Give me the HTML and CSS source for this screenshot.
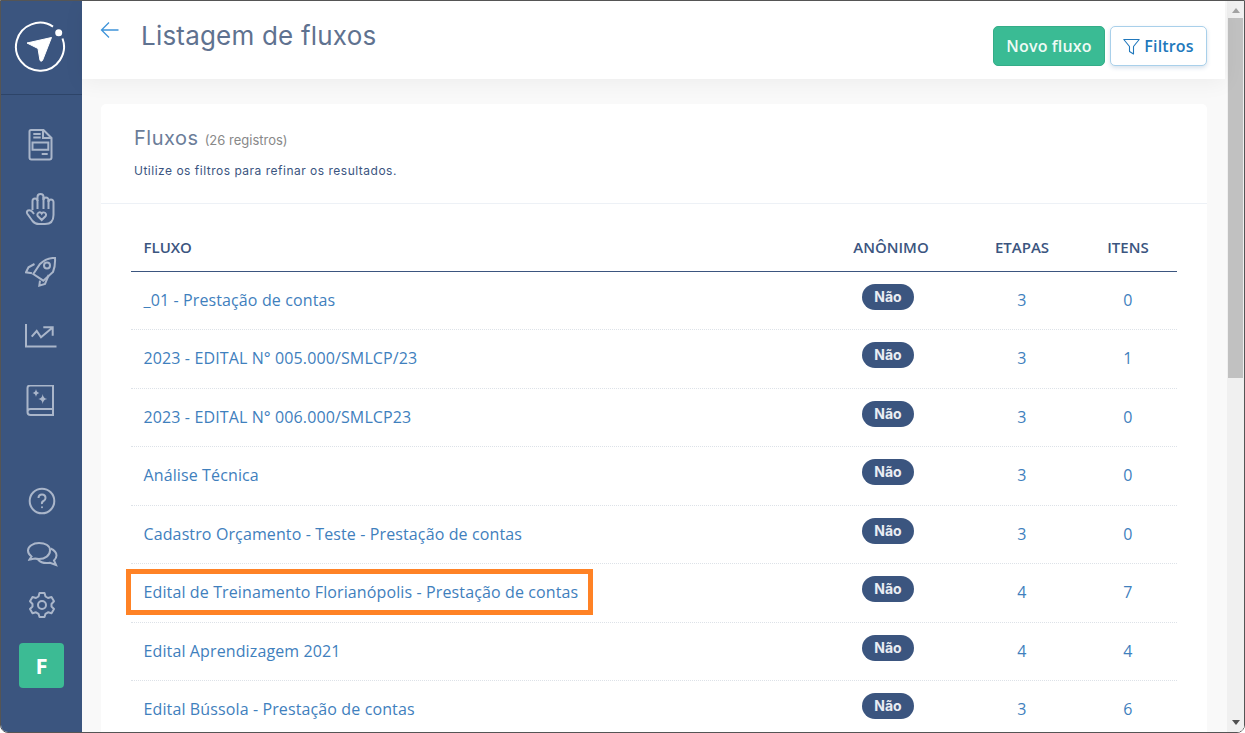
FILE: index.html
```html
<!DOCTYPE html>
<html lang="pt">
<head>
<meta charset="utf-8">
<title>Listagem de fluxos</title>
<link rel="stylesheet" href="styles.css">
</head>
<body>
<div class="window">
  <aside class="sidebar">
    <div class="logo">
      <svg width="52" height="52" viewBox="0 0 52 52" fill="none">
        <path d="M39 5.600A24 24 0 1 0 48.500 17.500" stroke="#fff" stroke-width="2"/>
        <circle cx="44.700" cy="11.700" r="3.500" fill="#fff"/>
        <path d="M13 22 37.500 16.500 28.500 39.500Q27 41 26 39.500L24 27.500Z" fill="#fff" stroke="#fff" stroke-linejoin="round"/>
      </svg>
    </div>
    <nav class="nav-top">
      <svg class="ico" width="32" height="32" viewBox="0 0 32 32"><path d="M6 1H18.500L26.500 9V28.500A2 2 0 0 1 24.500 30.500H6.500A2 2 0 0 1 4.500 28.500V2.500A1.500 1.500 0 0 1 6 1Z"/><path d="M18 1.500V9H26.500M8.300 5H15.700M8.300 8.500H15.700M7.500 13.500H23.300V20.700H7.500ZM16.700 25H22.700"/></svg>
      <svg class="ico" width="32" height="32" viewBox="0 0 32 32"><path d="M7.500 17V8A2.500 2.500 0 0 1 12.500 8V4A3 3 0 0 1 18.500 4V7A2.500 2.500 0 0 1 23.500 7V9A2.500 2.500 0 0 1 28.500 9V22Q28.500 31 20 31H14Q10 31 7.500 28L2.500 21Q1 18.500 3 17.500T7 18.500L9 21"/><path d="M12.500 7V16M18.500 4V16M23.500 7V16"/><path d="M16.700 27 12.700 23A2.300 2.300 0 0 1 16.700 20.500 2.300 2.300 0 0 1 20.700 23Z"/></svg>
      <svg class="ico" width="32" height="32" viewBox="0 0 32 32"><path d="M30 .8Q21 1 15 7L8.300 17 18.300 23.700 28 15Q30.500 9 30 .8Z"/><circle cx="22" cy="8.500" r="3"/><path d="M9.500 7 3.500 10.300 1 15.300 7 16.300M23.700 18 20 27 14.300 28.700 15 23.700"/></svg>
      <svg class="ico" width="32" height="32" viewBox="0 0 32 32"><path d="M1 3V25.500H31.500"/><path d="M6.700 15.700 11.700 10 16 16.300 26.700 7.300M18.300 6.300H27.700V14.700"/></svg>
      <svg class="ico" width="32" height="32" viewBox="0 0 32 32"><path d="M28 .5H5Q2.500 .5 2.500 3V27Q2.500 30 5.500 30H28V.5ZM2.500 27Q2.500 24 5.500 24H28"/><path d="M11 4Q11.500 7.500 14.500 8 11.500 8.500 11 12 10.500 8.500 7.500 8 10.500 7.500 11 4ZM17.700 9Q18.200 13.500 22.200 14 18.200 14.500 17.700 19 17.200 14.500 13.200 14 17.200 13.500 17.700 9Z" class="solid"/></svg>
    </nav>
    <nav class="nav-bottom">
      <svg class="ico" width="28" height="28" viewBox="0 0 28 28"><circle cx="14" cy="14" r="12.300"/><path d="M10.500 11Q10.500 7.500 14 7.500T17.500 11Q17.500 13 15.500 14T14 17"/><circle cx="14" cy="20.300" r="1" class="solid"/></svg>
      <svg class="ico chat" width="32" height="26" viewBox="0 0 32 26"><path d="M13 2C7 2 2 5.500 2 9.500 2 12 3.500 14 5.500 15.500L3.500 18.500 9 17.500Q11 18 13 18C19 18 24 14.500 24 9.500S19 2 13 2Z"/><path d="M24.500 7.500C28 9 30.500 11.500 30.500 14.500 30.500 16.500 29.500 18 28 19.500L30 24 24 21.800C20 22.500 15 22 12 18.500"/></svg>
      <svg class="ico" width="28" height="28" viewBox="0 0 28 28"><path d="M11.500 2H16.500L17.500 5.500 20 7 23.500 6 26 10.300 23.500 13V15.500L26 18 23.500 22.300 20 21.300 17.500 22.800 16.500 26H11.500L10.500 22.800 8 21.300 4.500 22.300 2 18 4.500 15.500V13L2 10.300 4.500 6 8 7 10.500 5.500Z" stroke-linejoin="round"/><circle cx="14" cy="14" r="4"/></svg>
      <div class="avatar">F</div>
    </nav>
  </aside>
  <div class="main">
    <div class="page">
      <header class="topbar">
        <div class="title-group">
          <svg class="back" width="20" height="18" viewBox="0 0 20 18" fill="none"><path d="M18.500 9H1.500M9 1.500 1.500 9 9 16.500" stroke="#3f94d9" stroke-width="1.300"/></svg>
          <h1 class="title">Listagem de fluxos</h1>
        </div>
        <div class="actions">
          <a class="btn btn-green">Novo fluxo</a>
          <a class="btn btn-outline">
            <svg width="17" height="17" viewBox="0 0 17 17" fill="none"><path d="M.8 1.500H16.200L10.500 8.500V16L6.500 13.500V8.500Z" stroke="#2178bc" stroke-width="1.100" stroke-linejoin="round"/></svg>
            Filtros
          </a>
        </div>
      </header>
      <section class="content">
        <div class="card">
          <div class="card-head">
            <h2 class="card-title">Fluxos <small class="count">(26 registros)</small></h2>
            <p class="hint">Utilize os filtros para refinar os resultados.</p>
          </div>
          <div class="table">
            <div class="row head"><div>FLUXO</div><div class="c">ANÔNIMO</div><div class="c">ETAPAS</div><div class="c">ITENS</div></div>
            <div class="row"><div><a>_01 - Prestação de contas</a></div><div class="c"><span class="pill">Não</span></div><div class="c"><a>3</a></div><div class="c"><a>0</a></div></div>
            <div class="row"><div><a>2023 - EDITAL N° 005.000/SMLCP/23</a></div><div class="c"><span class="pill">Não</span></div><div class="c"><a>3</a></div><div class="c"><a>1</a></div></div>
            <div class="row"><div><a>2023 - EDITAL N° 006.000/SMLCP23</a></div><div class="c"><span class="pill">Não</span></div><div class="c"><a>3</a></div><div class="c"><a>0</a></div></div>
            <div class="row"><div><a>Análise Técnica</a></div><div class="c"><span class="pill">Não</span></div><div class="c"><a>3</a></div><div class="c"><a>0</a></div></div>
            <div class="row"><div><a>Cadastro Orçamento - Teste - Prestação de contas</a></div><div class="c"><span class="pill">Não</span></div><div class="c"><a>3</a></div><div class="c"><a>0</a></div></div>
            <div class="row"><div class="marked"><a>Edital de Treinamento Florianópolis - Prestação de contas</a><span class="highlight"></span></div><div class="c"><span class="pill">Não</span></div><div class="c"><a>4</a></div><div class="c"><a>7</a></div></div>
            <div class="row"><div><a>Edital Aprendizagem 2021</a></div><div class="c"><span class="pill">Não</span></div><div class="c"><a>4</a></div><div class="c"><a>4</a></div></div>
            <div class="row"><div><a>Edital Bússola - Prestação de contas</a></div><div class="c"><span class="pill">Não</span></div><div class="c"><a>3</a></div><div class="c"><a>6</a></div></div>
          </div>
        </div>
      </section>
    </div>
    <div class="scrollbar">
      <span class="arrow up"></span>
      <div class="track"><div class="thumb"></div></div>
      <span class="arrow down"></span>
    </div>
  </div>
</div>
</body>
</html>
```
FILE: styles.css
```css
* { box-sizing: border-box; }
html, body { margin: 0; height: 100%; overflow: hidden; background: #fff; }
body { font-family: "Open Sans", "Liberation Sans", sans-serif; }
.window {
  display: flex;
  height: 733px;
  border: 1px solid #555;
  border-radius: 0 0 8px 8px;
  overflow: hidden;
}
.sidebar {
  width: 81px;
  flex: none;
  background: #3b557f;
  display: flex;
  flex-direction: column;
}
.logo {
  height: 94px;
  flex: none;
  border-bottom: 1px solid #2d4468;
  display: flex;
  align-items: center;
  justify-content: center;
  padding: 0 4px 2px 0;
}
.ico { fill: none; stroke: #aab6ca; stroke-width: 2; display: block; }
.ico .solid { fill: #aab6ca; stroke: none; }
.nav-top {
  display: flex;
  flex-direction: column;
  align-items: center;
  gap: 32px;
  padding: 34px 1px 0 0;
}
.nav-bottom {
  margin-top: auto;
  display: flex;
  flex-direction: column;
  align-items: center;
  padding-bottom: 44px;
}
.nav-bottom .ico { margin-bottom: 26px; }
.nav-bottom .chat { margin-bottom: 24px; }
.avatar {
  width: 45px;
  height: 45px;
  margin-top: -2px;
  background: #3cbb94;
  border-radius: 4px;
  color: #fff;
  font: 700 22px/45px "Open Sans", sans-serif;
  text-align: center;
}
.main { flex: 1; display: flex; min-width: 0; background: #f9f9f9; }
.page { flex: 1; min-width: 0; display: flex; flex-direction: column; }
.topbar {
  height: 78px;
  flex: none;
  background: #fff;
  box-shadow: 0 4px 20px rgba(0, 0, 0, .05);
  display: flex;
  justify-content: space-between;
  padding: 0 18px;
  position: relative;
}
.title-group { display: flex; align-items: flex-start; gap: 21px; }
.back { margin-top: 20px; }
.title {
  margin: 19px 0 0;
  font: 400 26px/32px Inter, sans-serif;
  color: #5f7290;
  letter-spacing: .2px;
}
.actions { display: flex; gap: 5px; padding-top: 25px; }
.btn {
  height: 40px;
  border-radius: 5px;
  font-size: 16px;
  font-weight: 600;
  letter-spacing: .15px;
  display: flex;
  align-items: center;
  justify-content: center;
}
.btn-green { width: 112px; background: #3abb94; color: #eefaf5; border: 1px solid #34ad88; }
.btn-outline {
  width: 97px;
  gap: 4px;
  color: #2178bc;
  background: #fff;
  border: 1px solid #a9d0ea;
  box-shadow: 0 2px 4px rgba(60, 110, 160, .2);
}
.content { flex: 1; min-height: 0; padding: 25px 18px 0 19px; overflow: hidden; }
.card { background: #fff; border-radius: 5px 5px 0 0; height: 900px; }
.card-head { height: 100px; padding: 21px 33px 0; border-bottom: 1px solid #edf1f6; }
.card-title {
  margin: 0;
  font: 400 20px/26px Inter, sans-serif;
  color: #6b7d99;
  letter-spacing: .5px;
}
.count { font-size: 13px; color: #888; letter-spacing: 0; }
.hint {
  margin: 10px 0 0;
  font: 400 12px/16px Inter, sans-serif;
  color: #3b557f;
  letter-spacing: .5px;
}
.table { margin: 0 30px; padding-top: 23px; }
.row {
  display: grid;
  grid-template-columns: 686px 148px 114px 98px;
  height: 58.500px;
  align-items: center;
  border-bottom: 1px dotted #dde2e8;
  padding-bottom: 1px;
  font-size: 16px;
  letter-spacing: .12px;
  color: #3f80bd;
}
.row > div:first-child { padding-left: 12.500px; }
.row.head {
  height: 44.500px;
  padding-bottom: 3px;
  border-bottom: 1px solid #3b557f;
  color: #3b557f;
  font-size: 15px;
  letter-spacing: 0;
  font-weight: 600;
}
.c { text-align: center; }
.marked { position: relative; }
.highlight {
  position: absolute;
  left: -5px;
  top: -12px;
  width: 467px;
  height: 46px;
  border: 5px solid #ff8225;
}
.pill {
  display: inline-block;
  width: 52px;
  height: 26px;
  margin-right: 6px;
  border-radius: 13px;
  background: #3b557f;
  color: #e9edf3;
  font: 700 14px/25px Inter, "Liberation Sans", sans-serif;
  letter-spacing: 0;
  text-align: center;
  position: relative;
  top: -3px;
}
.scrollbar {
  width: 17px;
  flex: none;
  margin-left: 2px;
  background: #f0f0f0;
  display: flex;
  flex-direction: column;
  align-items: center;
}
.track { flex: 1; width: 100%; padding: 0 0 0 1px; }
.thumb { width: 15px; height: 360px; background: #c1c1c1; }
.arrow { width: 0; height: 0; flex: none; border-left: 4px solid transparent; border-right: 4px solid transparent; }
.arrow.up { border-bottom: 5px solid #a3a3a3; margin: 7px 0 5px; }
.arrow.down { border-top: 5px solid #505050; margin: 5px 0 7px; }
```
